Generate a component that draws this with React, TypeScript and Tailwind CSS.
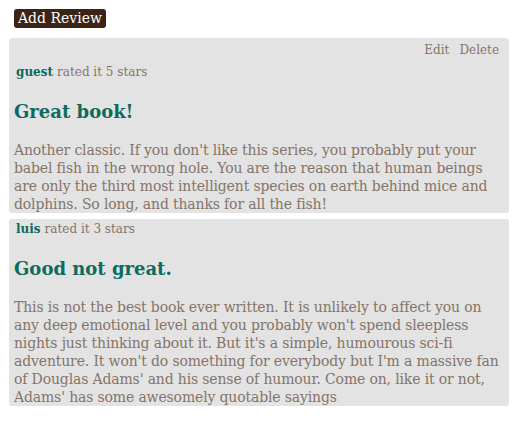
type Review = {
  user: string;
  stars: number;
  title: string;
  body: string;
  mine?: boolean;
};

const reviews: Review[] = [
  {
    user: "guest",
    stars: 5,
    title: "Great book!",
    body: "Another classic. If you don't like this series, you probably put your babel fish in the wrong hole. You are the reason that human beings are only the third most intelligent species on earth behind mice and dolphins. So long, and thanks for all the fish!",
    mine: true,
  },
  {
    user: "luis",
    stars: 3,
    title: "Good not great.",
    body: "This is not the best book ever written. It is unlikely to affect you on any deep emotional level and you probably won't spend sleepless nights just thinking about it. But it's a simple, humourous sci-fi adventure. It won't do something for everybody but I'm a massive fan of Douglas Adams' and his sense of humour. Come on, like it or not, Adams' has some awesomely quotable sayings",
  },
];

const ReviewCard = ({ review }: { review: Review }) => (
  <div className="rounded-[3px] bg-[#e3e3e3] px-[5px] text-[#857468]">
    {review.mine && (
      <div className="flex justify-end gap-[10px] pb-[2px] pr-[5px] pt-[3px] text-[12px] leading-[19px]">
        <span>Edit</span>
        <span>Delete</span>
      </div>
    )}
    <div className="flex items-baseline pl-[2px] pt-[1px] text-[12px] leading-[19px]">
      <span className="font-bold text-[#0d6b5e]">{review.user}</span>
      <span className="ml-[4px]">rated it {review.stars} stars</span>
    </div>
    <h3 className="mb-[15px] mt-[16px] text-[18px] font-bold leading-[28px] text-[#0d6b5e]">{review.title}</h3>
    <p className="text-[14px] leading-[18px] tracking-[-0.15px]">{review.body}</p>
  </div>
);

export default function App() {
  return (
    <div className="min-h-[421px] bg-white px-[9px] pt-[9px] font-['DejaVu_Serif',serif]">
      <div className="flex">
        <button
          type="button"
          className="ml-[5px] rounded-[3px] bg-[#3b2316] px-[4px] text-[14px] leading-[19px] text-white"
        >
          Add Review
        </button>
      </div>
      <div className="mt-[10px] flex w-[500px] flex-col gap-[6px]">
        {reviews.map((r) => (
          <ReviewCard key={r.user} review={r} />
        ))}
      </div>
    </div>
  );
}
